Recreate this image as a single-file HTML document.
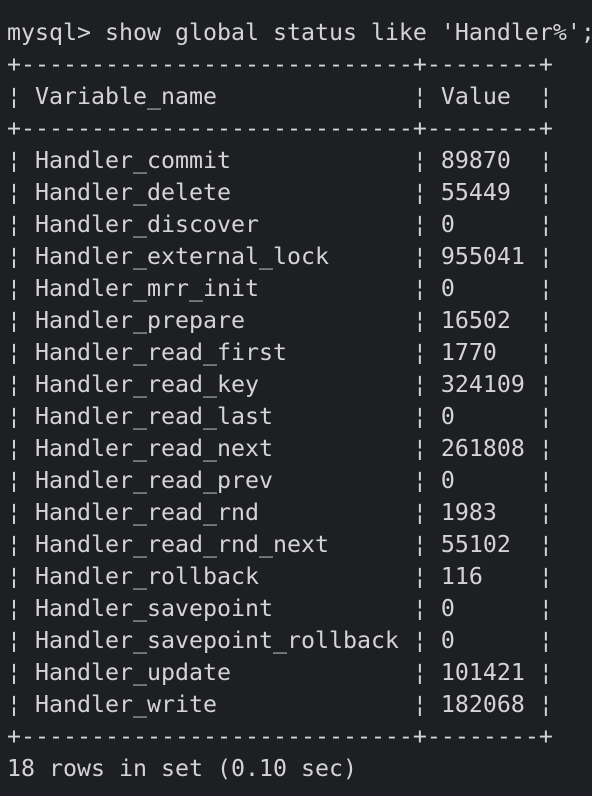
<!DOCTYPE html>
<html><head><style>
html,body{margin:0;padding:0;background:#1e1f22;width:592px;height:796px;overflow:hidden}
pre{margin:0;padding:17px 0 0 7px;font-family:"DejaVu Sans Mono","Liberation Mono",monospace;font-size:23.25px;line-height:32px;color:#d4d4d4;white-space:pre}
</style></head><body><pre>mysql&gt; show global status like 'Handler%';
+----------------------------+--------+
¦ Variable_name              ¦ Value  ¦
+----------------------------+--------+
¦ Handler_commit             ¦ 89870  ¦
¦ Handler_delete             ¦ 55449  ¦
¦ Handler_discover           ¦ 0      ¦
¦ Handler_external_lock      ¦ 955041 ¦
¦ Handler_mrr_init           ¦ 0      ¦
¦ Handler_prepare            ¦ 16502  ¦
¦ Handler_read_first         ¦ 1770   ¦
¦ Handler_read_key           ¦ 324109 ¦
¦ Handler_read_last          ¦ 0      ¦
¦ Handler_read_next          ¦ 261808 ¦
¦ Handler_read_prev          ¦ 0      ¦
¦ Handler_read_rnd           ¦ 1983   ¦
¦ Handler_read_rnd_next      ¦ 55102  ¦
¦ Handler_rollback           ¦ 116    ¦
¦ Handler_savepoint          ¦ 0      ¦
¦ Handler_savepoint_rollback ¦ 0      ¦
¦ Handler_update             ¦ 101421 ¦
¦ Handler_write              ¦ 182068 ¦
+----------------------------+--------+
18 rows in set (0.10 sec)</pre></body></html>
